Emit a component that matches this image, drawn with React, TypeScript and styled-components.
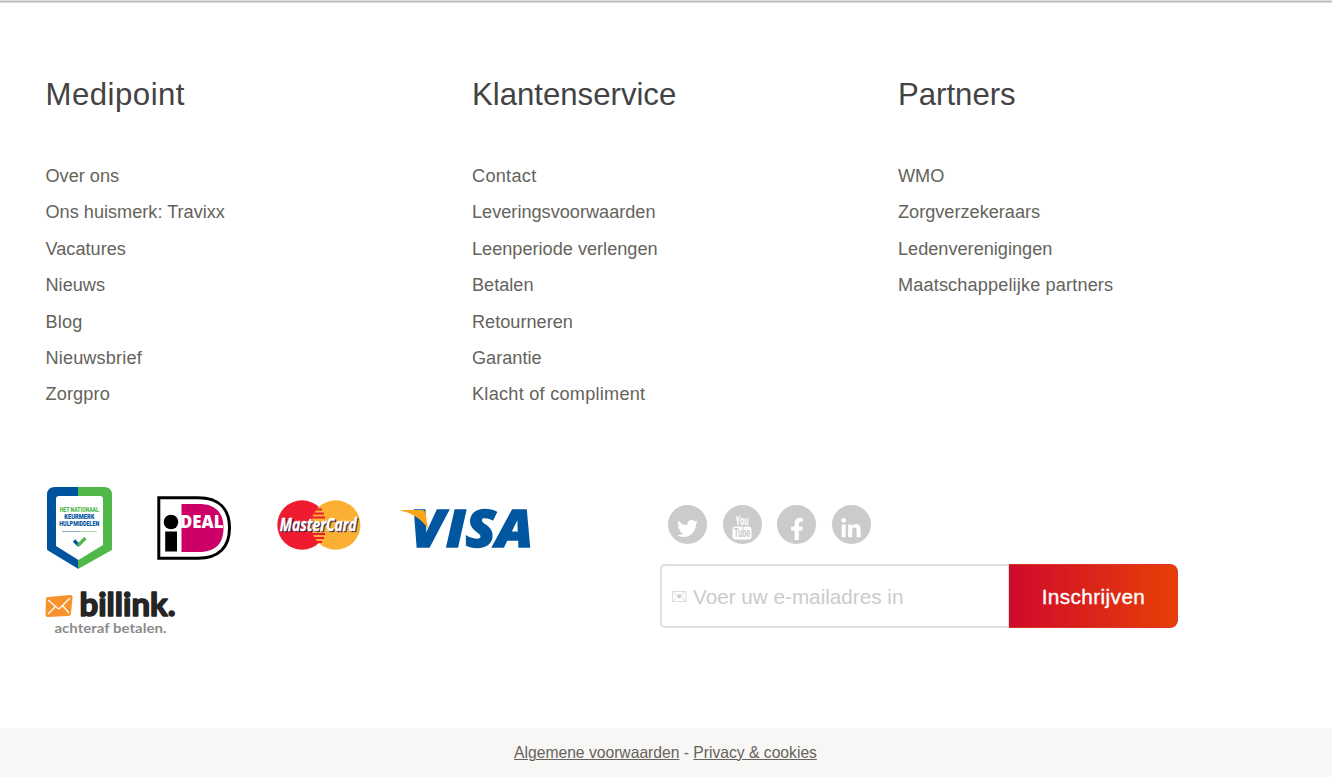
import React from 'react';
import styled, { createGlobalStyle } from 'styled-components';
import { FaTwitter, FaFacebookF, FaLinkedinIn } from 'react-icons/fa';

const GlobalStyle = createGlobalStyle`
  * { box-sizing: border-box; }
  body {
    margin: 0;
    background: #fff;
    font-family: "Liberation Sans", Arial, sans-serif;
    color: #65635b;
  }
`;

const Page = styled.footer`
  display: flex;
  flex-direction: column;
  width: 100%;
  height: 777px;
  overflow: hidden;
  border-top: 1px solid #dedede;
`;

const Divider = styled.div`
  flex: none;
  height: 2px;
  background: linear-gradient(#bbb 50%, #dedede 50%);
`;

const Columns = styled.div`
  display: grid;
  grid-template-columns: 426.5px 426px 1fr;
  height: 483px;
  flex: none;
  padding: 71px 0 0 45.5px;
`;

const Heading = styled.h2<{ $tracking?: number }>`
  margin: 0;
  font-size: 31.15px;
  line-height: 42px;
  font-weight: 400;
  letter-spacing: ${(p) => p.$tracking ?? 0}px;
  color: #434344;
`;

const Links = styled.ul`
  list-style: none;
  margin: 42px 0 0;
  padding: 0;
`;

const LinkItem = styled.li<{ $tracking?: number }>`
  height: 36.4px;
  line-height: 36.4px;
  font-size: 18.15px;
  letter-spacing: ${(p) => p.$tracking ?? 0}px;
  white-space: nowrap;
`;

const Lower = styled.div`
  display: flex;
  flex: none;
  height: 242px;
`;

const Payments = styled.div`
  width: 660px;
  padding-left: 45px;
`;

const LogoRow = styled.div`
  display: flex;
  height: 84px;
`;

const Logo = styled.svg<{ $gap?: number; $top?: number }>`
  display: block;
  flex: none;
  margin-left: ${(p) => p.$gap ?? 0}px;
  margin-top: ${(p) => p.$top ?? 0}px;
  overflow: visible;
`;

const Signup = styled.div`
  width: 518px;
  padding-top: 19px;
`;

const Socials = styled.div`
  display: flex;
  gap: 15.6px;
  padding-left: 8px;
  height: 59px;
`;

const SocialButton = styled.a<{ $drop?: number }>`
  display: flex;
  align-items: center;
  justify-content: center;
  width: 39px;
  height: 39px;
  padding-top: ${(p) => p.$drop ?? 8}px;
  border-radius: 50%;
  background: #cbcbcb;
  color: #fff;
  svg { overflow: visible; flex: none; }
`;

const Form = styled.form`
  display: flex;
  height: 64px;
`;

const EmailField = styled.div`
  display: flex;
  align-items: center;
  width: 349px;
  padding: 1px 0 0 10px;
  border: 2px solid #dfdfdf;
  border-right-width: 1px;
  border-radius: 5px 0 0 5px;
  color: #cbcbcb;
  font-size: 20.7px;
  white-space: nowrap;
`;

const SubmitButton = styled.button`
  width: 169px;
  padding: 1px 0 0 1px;
  border: 1px solid #dc3328;
  border-left: 0;
  border-radius: 0 8px 8px 0;
  background: linear-gradient(90deg, #cf0a2c, #e73f07);
  color: #fff;
  font: 20.8px "Liberation Sans", Arial, sans-serif;
  letter-spacing: 0.38px;
  -webkit-text-stroke: 0.35px #fff;
`;

const Legal = styled.div`
  flex: 1;
  padding: 15px 1px 0 0;
  text-align: center;
  background: #f8f7f5;
  font-size: 15.66px;
  line-height: 20px;
  a { text-decoration: underline; text-underline-offset: 1px; text-decoration-thickness: 1px; }
`;

type Entry = { label: string; tracking?: number };

const columns: { title: string; tracking?: number; links: Entry[] }[] = [
  {
    title: 'Medipoint',
    tracking: 0.5,
    links: [
      { label: 'Over ons' },
      { label: 'Ons huismerk: Travixx' },
      { label: 'Vacatures' },
      { label: 'Nieuws' },
      { label: 'Blog', tracking: 0.2 },
      { label: 'Nieuwsbrief', tracking: 0.14 },
      { label: 'Zorgpro', tracking: 0.12 },
    ],
  },
  {
    title: 'Klantenservice',
    links: [
      { label: 'Contact', tracking: 0.28 },
      { label: 'Leveringsvoorwaarden' },
      { label: 'Leenperiode verlengen' },
      { label: 'Betalen' },
      { label: 'Retourneren' },
      { label: 'Garantie' },
      { label: 'Klacht of compliment', tracking: 0.25 },
    ],
  },
  {
    title: 'Partners',
    links: [
      { label: 'WMO' },
      { label: 'Zorgverzekeraars' },
      { label: 'Ledenverenigingen' },
      { label: 'Maatschappelijke partners', tracking: 0.14 },
    ],
  },
];

const KeurmerkLogo = () => (
  <Logo $gap={2} $top={1} width="65" height="82" viewBox="0 0 65 82" fontFamily="Roboto, sans-serif" fontWeight="900" fontSize="6.3" textAnchor="middle">
    <path d="M31.500 0H8Q0 0 0 8V62Q0 63 1 63.500L31.500 82Z" fill="#00549f" />
    <path d="M31 0H57Q65 0 65 8V62Q65 63 64 63.500L31 82Z" fill="#50b848" />
    <path d="M12 9H53Q56 9 56 12V58L31.500 73L9 59V12Q9 9 12 9Z" fill="#fff" />
    <text x="32.300" y="25.300" textLength="39" lengthAdjust="spacingAndGlyphs" fill="#50b848">HET NATIONAAL</text>
    <text x="32.300" y="32" textLength="30" lengthAdjust="spacingAndGlyphs" fill="#00549f">KEURMERK</text>
    <text x="32.300" y="38.500" textLength="40" lengthAdjust="spacingAndGlyphs" fill="#00549f">HULPMIDDELEN</text>
    <path d="M15 44.500H32" stroke="#8caed0" />
    <path d="M32 44.500H50" stroke="#a5d8a2" />
    <path d="M27 53.500L32 58.500" stroke="#00549f" strokeWidth="3.200" />
    <path d="M31 58.500L38.500 51" stroke="#50b848" strokeWidth="3.200" />
  </Logo>
);

const IdealLogo = () => (
  <Logo $gap={45} $top={10} width="75" height="65" viewBox="0 0 75 65">
    <path d="M1.800 1.800H41C62 1.800 72.500 13 72.500 32S62 62.200 41 62.200H1.800Z" fill="#fff" stroke="#000" strokeWidth="3" />
    <path d="M24.500 8H42C59 8 66.500 17 66.500 32S59 56 42 56H24.500Z" fill="#cc0066" />
    <circle cx="14" cy="26" r="8.800" fill="#fff" />
    <circle cx="14" cy="26" r="7.300" fill="#000" />
    <rect x="8.200" y="35.500" width="11.800" height="20" fill="#000" />
    <text x="23" y="32.200" fontFamily="Open Sans, sans-serif" fontWeight="800" fontSize="17.500" textLength="43.500" lengthAdjust="spacingAndGlyphs" fill="#fff">DEAL</text>
  </Logo>
);

const MasterCardLogo = () => (
  <Logo $gap={44.5} $top={14} width="84" height="50" viewBox="0 0 84 50">
    <circle cx="25" cy="25" r="24.700" fill="#ee1c2e" />
    <circle cx="58.700" cy="25" r="24.700" fill="#fbb034" />
    <path d="M39 9.500H45M37 13.500H47M35 17.500H48M35 34H48M36 38H47M39 42H45" stroke="#ee1c2e" strokeWidth="2" />
    <g fontFamily="Open Sans, sans-serif" fontWeight="700" fontStyle="italic" fontSize="17">
      <text x="3.800" y="32" textLength="77" lengthAdjust="spacingAndGlyphs" fill="#30264f" stroke="#30264f" strokeWidth=".5">MasterCard</text>
      <text x="2.800" y="31" textLength="77" lengthAdjust="spacingAndGlyphs" fill="#fff" stroke="#fff" strokeWidth=".3">MasterCard</text>
    </g>
  </Logo>
);

const VisaLogo = () => (
  <Logo $gap={40.5} $top={23} width="131" height="40" viewBox="0 0 131 40" fontFamily="Open Sans, sans-serif" fontWeight="800" fontStyle="italic" fontSize="51" fill="#00579f" stroke="#00579f" strokeWidth="1.400">
    <text x="9.500" y="38" textLength="34" lengthAdjust="spacingAndGlyphs">V</text>
    <text x="45" y="38" textLength="87" lengthAdjust="spacingAndGlyphs">ISA</text>
    <path d="M0 1H21Q24 1 24.500 4L27 20Q22 11.500 12 6Q7 3 0 1.800Z" fill="#faa61a" stroke="none" />
  </Logo>
);

const BillinkLogo = () => (
  <Logo $top={20} width="132" height="48" viewBox="0 0 132 48">
    <path d="M3 7L25 5Q28 5 27.500 8L26 23Q26 26 23 26L3 27Q0 27 .5 24L1 9Q1 7 3 7Z" fill="#f7922d" />
    <path d="M3 10L13 18.500Q14 19 15 18L25 8M3 24L10 17M18 16L24 23" fill="none" stroke="#fff" strokeWidth="1.300" />
    <text x="34.500" y="26" fontFamily="Lato, sans-serif" fontWeight="700" fontSize="33" textLength="96" lengthAdjust="spacingAndGlyphs" fill="#272425" stroke="#272425" strokeWidth="1.600" strokeLinejoin="round">billink.</text>
    <text x="9.500" y="43" fontFamily="Lato, sans-serif" fontWeight="700" fontSize="13" textLength="112" lengthAdjust="spacingAndGlyphs" fill="#8c8c8c">achteraf betalen.</text>
  </Logo>
);

const YouTubeIcon = () => (
  <svg width="20" height="25" viewBox="0 0 20 25" fontFamily="Roboto, sans-serif" fontWeight="700" textAnchor="middle">
    <text x="10" y="9.800" fontSize="12.500" textLength="13" lengthAdjust="spacingAndGlyphs" fill="#fff">You</text>
    <rect x=".5" y="11.500" width="19" height="13" rx="3" fill="#fff" />
    <text x="10" y="22.300" fontSize="12" textLength="16" lengthAdjust="spacingAndGlyphs" fill="#cbcbcb">Tube</text>
  </svg>
);

const EnvelopeIcon = () => (
  <svg width="15" height="11" viewBox="0 0 15 11" fill="none" stroke="#d5d5d5" strokeWidth=".8">
    <path d="M.5 .5H14V10.500H.5ZM.5 .5L5.500 5.500L.5 10.500M14 .5L9 5.500L14 10.500" />
    <path d="M5.500 3.500H9V6L7.300 7.500L5.500 6Z" fill="#cbcbcb" stroke="none" />
  </svg>
);

const FieldText = styled.span`
  margin-left: 6px;
`;

export default function App() {
  return (
    <>
      <GlobalStyle />
      <Page>
        <Divider />
        <Columns>
          {columns.map((column) => (
            <section key={column.title}>
              <Heading $tracking={column.tracking}>{column.title}</Heading>
              <Links>
                {column.links.map((link) => (
                  <LinkItem key={link.label} $tracking={link.tracking}>{link.label}</LinkItem>
                ))}
              </Links>
            </section>
          ))}
        </Columns>
        <Lower>
          <Payments>
            <LogoRow>
              <KeurmerkLogo />
              <IdealLogo />
              <MasterCardLogo />
              <VisaLogo />
            </LogoRow>
            <BillinkLogo />
          </Payments>
          <Signup>
            <Socials>
              <SocialButton aria-label="Twitter"><FaTwitter size={21} /></SocialButton>
              <SocialButton aria-label="YouTube" $drop={6}><YouTubeIcon /></SocialButton>
              <SocialButton aria-label="Facebook"><FaFacebookF size={22} /></SocialButton>
              <SocialButton aria-label="LinkedIn" $drop={9}><FaLinkedinIn size={22} /></SocialButton>
            </Socials>
            <Form>
              <EmailField>
                <EnvelopeIcon />
                <FieldText>Voer uw e-mailadres in</FieldText>
              </EmailField>
              <SubmitButton type="button">Inschrijven</SubmitButton>
            </Form>
          </Signup>
        </Lower>
        <Legal>
          <a>Algemene voorwaarden</a> - <a>Privacy &amp; cookies</a>
        </Legal>
      </Page>
    </>
  );
}
